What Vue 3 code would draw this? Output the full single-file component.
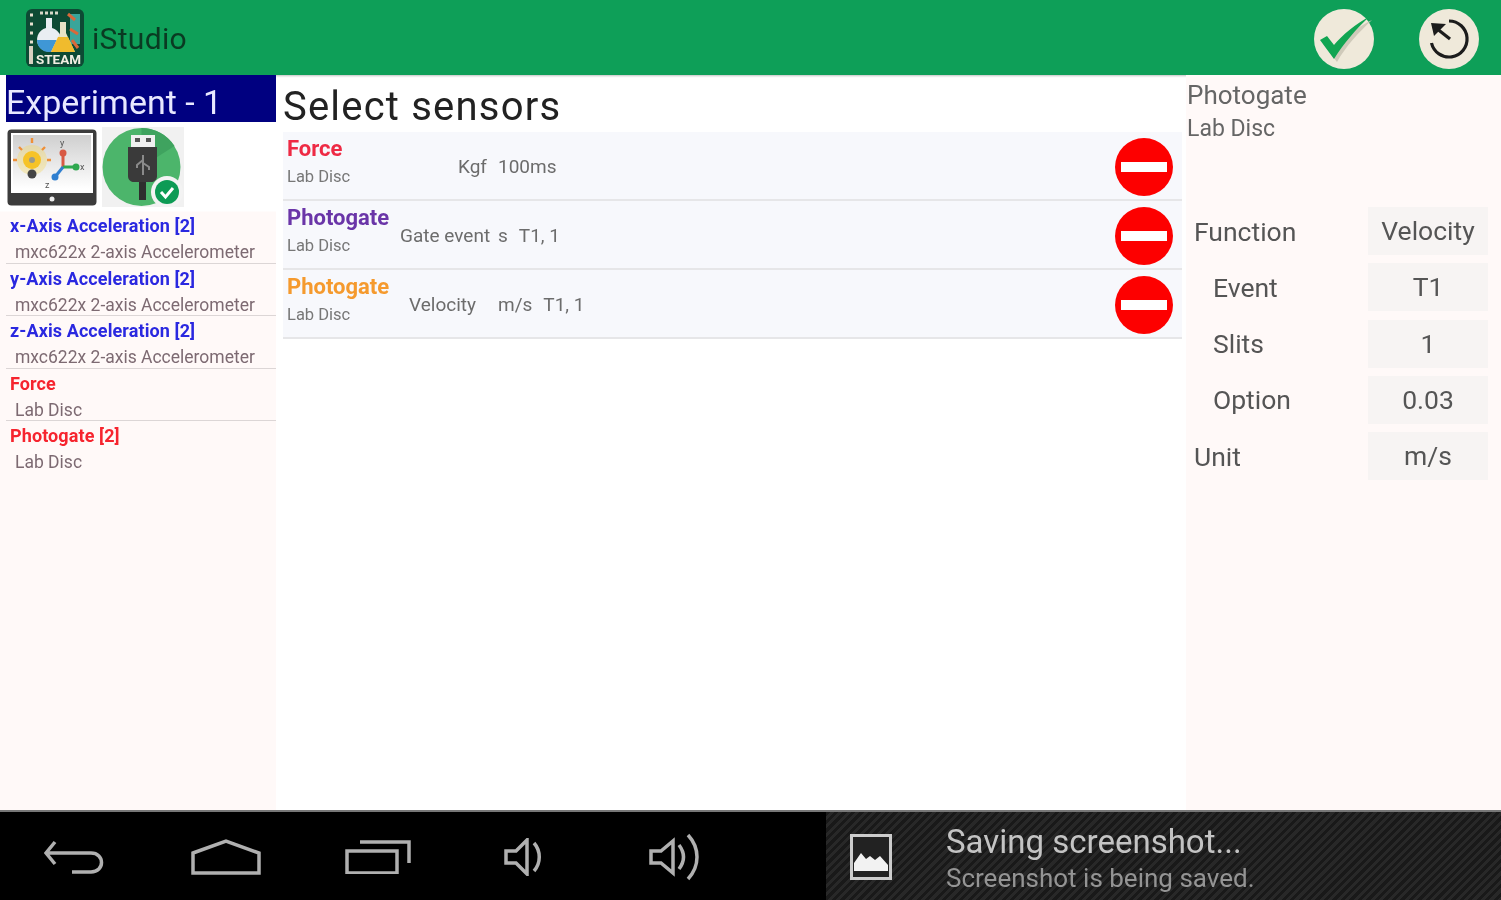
<template>
  <div class="screen">
    <header class="topbar">
      <div class="brand">
        <svg class="logo" viewBox="0 0 58 58">
          <rect width="58" height="58" rx="6" fill="#0d4a34" />
          <path d="M44 5h10v30H44z" fill="#3aa59a" />
          <path d="M4 6h3M4 15h3M4 24h3M4 33h3" stroke="#e8e0d0" stroke-width="3" />
          <path d="M42 5l7 6M44 20l8 5M46 31l6 8" stroke="#d9683a" stroke-width="3" />
          <path d="M14 4h18" stroke="#d8d8c8" stroke-width="3" stroke-dasharray="3 2" />
          <path d="M20 9h6v10a12 12 0 1 1-6 0z" fill="#e9eef2" />
          <path d="M11 31h24a12 12 0 0 1-24 0z" fill="#3f97d6" />
          <path d="M34 13h6v11l9 19H25l9-19z" fill="#e9e3c6" />
          <path d="M32 28h10l7 15H25z" fill="#f0bb2d" />
          <rect x="3" y="37" width="4" height="18" fill="#d8d0c0" />
          <text x="10" y="55" class="logo-text" textLength="45" lengthAdjust="spacingAndGlyphs">STEAM</text>
        </svg>
        <span class="app-name">iStudio</span>
      </div>
      <div class="actions">
        <svg class="action" viewBox="0 0 60 60">
          <circle cx="30" cy="30" r="30" fill="#efe9da" />
          <path d="M9 35l6-4 7 9C30 29 42 19 58 11 45 23 32 37 23 53z" fill="#cfcaba" />
          <path d="M6 31l7-4 7 9C28 26 42 15 56 7 42 20 30 34 20 50z" fill="#11a552" />
        </svg>
        <svg class="action" viewBox="0 0 60 60">
          <circle cx="30" cy="30" r="30" fill="#efe9da" />
          <path d="M30 12a18 18 0 1 1-17.500 22" fill="none" stroke="#1c1c1c" stroke-width="3.200" />
          <path d="M31 30L17 19" stroke="#1c1c1c" stroke-width="3.200" fill="none" />
          <path d="M12 14l15 1-12 12z" fill="#1c1c1c" />
        </svg>
      </div>
    </header>

    <main class="content">
      <aside class="side">
        <div class="exp-title">Experiment - 1</div>
        <div class="tiles">
          <svg class="tablet" viewBox="0 0 90 77">
            <defs>
              <linearGradient id="screen-fill" x1="0" y1="0" x2="0" y2="1">
                <stop offset="0" stop-color="#cfcfcf" />
                <stop offset="1" stop-color="#ffffff" />
              </linearGradient>
            </defs>
            <rect x="0.500" y="0.500" width="89" height="76" rx="4" fill="#3c3c3c" />
            <rect x="4" y="4" width="82" height="60" fill="#fff" />
            <rect x="6" y="6" width="78" height="54" fill="url(#screen-fill)" />
            <circle cx="25" cy="31" r="15" fill="#f6d65a" opacity="0.35" />
            <circle cx="25" cy="31" r="9" fill="#f6c327" />
            <circle cx="25" cy="31" r="3" fill="#9a9a8a" />
            <circle cx="25" cy="45" r="4.500" fill="#444" />
            <path d="M25 9v5M10 31H6M44 31h-4M12 18l3 3M38 18l-3 3" stroke="#ef9038" stroke-width="2.400" />
            <path d="M56 38V24" stroke="#d85a44" stroke-width="3" />
            <circle cx="56" cy="24" r="3.500" fill="#d85a44" />
            <path d="M56 38H70" stroke="#2fa84f" stroke-width="3" />
            <circle cx="69" cy="38" r="3.500" fill="#2fa84f" />
            <path d="M56 38L48 48" stroke="#2f7fd0" stroke-width="3" />
            <circle cx="48" cy="48" r="3.500" fill="#2f7fd0" />
            <text x="53" y="17" class="axis">y</text>
            <text x="73" y="41" class="axis">x</text>
            <text x="38" y="59" class="axis">z</text>
            <circle cx="45" cy="70" r="2.500" fill="#eee" />
          </svg>
          <div class="usb-tile">
            <svg class="usb" viewBox="0 0 82 80">
              <circle cx="39.500" cy="40" r="39" fill="#4cb56b" />
              <path d="M39.500 1a39 39 0 0 1 33 18L39.500 40z" fill="#3fa35f" />
              <rect x="29" y="8" width="24" height="14" fill="#f0f0f0" />
              <rect x="33" y="11" width="5" height="4" fill="#555" />
              <rect x="44" y="11" width="5" height="4" fill="#555" />
              <path d="M26 20h29v29c0 4-3 6-6 6H32c-3 0-6-2-6-6z" fill="#3a3a3a" />
              <path d="M41 28v20M41 33l-6 5v3M41 36l6 4v3" stroke="#8a8a8a" stroke-width="2" fill="none" />
              <rect x="37" y="55" width="7" height="18" fill="#2e2e2e" />
              <circle cx="65" cy="65" r="16" fill="#f3f3f3" />
              <circle cx="65" cy="65" r="12" fill="#0d9b55" />
              <path d="M59 65l4.500 5 7.500-9" fill="none" stroke="#fff" stroke-width="3" />
            </svg>
          </div>
        </div>
        <ul class="source-list">
          <li v-for="item in sources" :key="item.name" class="source">
            <span class="source-name" :class="item.kind">{{ item.name }}</span>
            <span class="source-sub">{{ item.sub }}</span>
          </li>
        </ul>
      </aside>

      <section class="middle">
        <h1 class="heading">Select sensors</h1>
        <div v-for="row in rows" :key="row.first" class="row">
          <div class="row-name">
            <span class="row-title" :style="{ color: row.color }">{{ row.title }}</span>
            <span class="row-sub">Lab Disc</span>
          </div>
          <span class="row-first" :style="{ paddingLeft: row.offset + 'px' }">{{ row.first }}</span>
          <span class="row-rest">
            <span v-for="part in row.rest" :key="part">{{ part }}</span>
          </span>
          <span class="remove"><i></i></span>
        </div>
      </section>

      <aside class="detail">
        <div class="detail-title">Photogate</div>
        <div class="detail-sub">Lab Disc</div>
        <div class="form">
          <div v-for="field in fields" :key="field.label" class="field">
            <span class="field-label" :class="{ nested: field.nested }">{{ field.label }}</span>
            <span class="field-value">{{ field.value }}</span>
          </div>
        </div>
      </aside>
    </main>

    <footer class="navbar">
      <div class="nav-icons">
        <svg class="nav back" viewBox="0 0 62 34">
          <path d="M11 2L2 13l9 11M3 13h44c14 0 14 19 0 19H28" />
        </svg>
        <svg class="nav home" viewBox="0 0 70 36">
          <path d="M2 14L35 2l33 12v20H2z" />
        </svg>
        <svg class="nav recent" viewBox="0 0 66 34">
          <path d="M2 11h50v22H2zM15 2h49v21" />
        </svg>
        <svg class="nav vol" viewBox="0 0 42 38">
          <path d="M2 13h10L23 2v34L12 25H2zM30 5c7 8 7 20 0 28" />
        </svg>
        <svg class="nav vol-up" viewBox="0 0 54 48">
          <path d="M2 18h10L24 8v32L12 30H2zM30 12c6 8 6 16 0 24M39 2c12 13 12 31 0 44" />
        </svg>
      </div>
      <div class="notice">
        <svg class="notice-icon" viewBox="0 0 42 46">
          <rect x="1.500" y="1.500" width="39" height="43" fill="#222" stroke="#ccc" stroke-width="3" />
          <path d="M4 37V29l7-10 5 6 4-3 5 4 5-4 8 9v6z" fill="#f2f2f2" />
        </svg>
        <div class="notice-text">
          <div class="notice-title">Saving screenshot...</div>
          <div class="notice-sub">Screenshot is being saved.</div>
        </div>
      </div>
    </footer>
  </div>
</template>

<script setup>
const acc = 'mxc622x 2-axis Accelerometer'

const sources = [
  { name: 'x-Axis Acceleration [2]', sub: acc, kind: 'blue' },
  { name: 'y-Axis Acceleration [2]', sub: acc, kind: 'blue' },
  { name: 'z-Axis Acceleration [2]', sub: acc, kind: 'blue' },
  { name: 'Force', sub: 'Lab Disc', kind: 'red' },
  { name: 'Photogate [2]', sub: 'Lab Disc', kind: 'red' },
]

const rows = [
  { title: 'Force', color: '#ee2a44', first: 'Kgf', rest: ['100ms'], offset: 58 },
  { title: 'Photogate', color: '#6a35a8', first: 'Gate event', rest: ['s', 'T1, 1'], offset: 0 },
  { title: 'Photogate', color: '#f59a2e', first: 'Velocity', rest: ['m/s', 'T1, 1'], offset: 9 },
]

const fields = [
  { label: 'Function', value: 'Velocity' },
  { label: 'Event', value: 'T1', nested: true },
  { label: 'Slits', value: '1', nested: true },
  { label: 'Option', value: '0.03', nested: true },
  { label: 'Unit', value: 'm/s' },
]
</script>

<style scoped>
.screen {
  width: 1501px;
  height: 900px;
  overflow: hidden;
  display: flex;
  flex-direction: column;
  font-family: Roboto, "Liberation Sans", sans-serif;
  background: #fff;
  filter: blur(0.7px);
}

.topbar {
  height: 75px;
  flex: none;
  display: flex;
  align-items: center;
  justify-content: space-between;
  background: #0e9f58;
  box-shadow: 0 1px 2px rgba(0, 0, 0, 0.25);
  padding: 0 22px 0 26px;
}
.brand {
  display: flex;
  align-items: center;
  gap: 8px;
  margin-top: 1px;
}
.logo {
  width: 58px;
  height: 58px;
}
.logo-text {
  font-size: 12px;
  font-weight: 700;
  fill: #f2efe2;
}
.app-name {
  font-size: 30px;
  color: #0a3a22;
  letter-spacing: 0.3px;
  margin-top: 1px;
}
.actions {
  display: flex;
  gap: 45px;
  margin-top: 2px;
}
.action {
  width: 60px;
  height: 60px;
}

.content {
  flex: 1;
  display: flex;
  min-height: 0;
}

.side {
  width: 276px;
  flex: none;
  padding-left: 6px;
  box-sizing: border-box;
  background: linear-gradient(#fff 136px, #fff9f8 137px);
}
.exp-title {
  height: 47px;
  line-height: 54px;
  background: #000080;
  color: #e8e8ff;
  font-size: 34px;
  overflow: hidden;
  white-space: nowrap;
}
.tiles {
  display: flex;
  align-items: flex-end;
  gap: 5px;
  margin-top: 5px;
  height: 80px;
}
.tablet {
  width: 90px;
  height: 77px;
  margin-bottom: 1px;
  margin-left: 1px;
}
.usb-tile {
  width: 82px;
  height: 80px;
  background: #f1f1f1;
}
.usb {
  display: block;
  width: 82px;
  height: 80px;
}
.source-list {
  list-style: none;
  margin: 4px 0 0;
  padding: 0;
}
.source {
  height: 52.500px;
  box-sizing: border-box;
  padding: 4px 0 0 4px;
  border-bottom: 1px solid #dcd6d6;
  display: flex;
  flex-direction: column;
}
.source:last-child {
  border-bottom: none;
}
.source-name {
  font-size: 18px;
  line-height: 22px;
  font-weight: 700;
  letter-spacing: 0.1px;
}
.source-name.blue {
  color: #2a28e0;
}
.source-name.red {
  color: #f6242e;
}
.source-sub {
  font-size: 17.500px;
  line-height: 24px;
  margin-top: 3px;
  padding-left: 5px;
  color: #7d6a72;
  white-space: nowrap;
}

.middle {
  flex: 1;
  min-width: 0;
  padding: 0 4px 0 7px;
}
.heading {
  margin: 0;
  height: 57px;
  line-height: 64px;
  font-size: 40px;
  font-weight: 400;
  color: #222;
  letter-spacing: 1.2px;
}
.row {
  height: 69px;
  box-sizing: border-box;
  display: flex;
  align-items: center;
  background: #f7f8fc;
  border-bottom: 2px solid #e6e6e8;
  padding-left: 4px;
  font-size: 19px;
  color: #6c6c6c;
}
.row-name {
  width: 113px;
  flex: none;
  display: flex;
  flex-direction: column;
  margin-top: -7px;
}
.row-title {
  font-size: 22px;
  line-height: 28px;
  font-weight: 700;
}
.row-sub {
  font-size: 16.500px;
  line-height: 26px;
  margin-top: 1px;
  color: #777;
}
.row-first {
  width: 98px;
  flex: none;
  box-sizing: border-box;
  white-space: nowrap;
  margin-top: 2px;
}
.row-rest {
  flex: 1;
  display: flex;
  gap: 11px;
  margin-top: 2px;
}
.remove {
  width: 58px;
  height: 58px;
  margin: 2px 9px 0 0;
  border-radius: 50%;
  background: #fd0000;
  display: flex;
  align-items: center;
  justify-content: center;
}
.remove i {
  width: 46px;
  height: 10px;
  background: #fff;
}

.detail {
  width: 315px;
  flex: none;
  background: #fff9f8;
  padding: 4px 13px 0 1px;
  box-sizing: border-box;
  margin-left: auto;
}
.detail-title {
  font-size: 26px;
  line-height: 32px;
  color: #666;
}
.detail-sub {
  font-size: 23px;
  line-height: 33px;
  padding-top: 1px;
  color: #666;
}
.form {
  margin-top: 62px;
  display: flex;
  flex-direction: column;
  gap: 8.300px;
}
.field {
  display: flex;
  justify-content: space-between;
  align-items: center;
  height: 48px;
  font-size: 26.500px;
  color: #555;
}
.field-label {
  padding-left: 7px;
}
.field-label.nested {
  padding-left: 26px;
}
.field-value {
  width: 120px;
  height: 48px;
  line-height: 48px;
  text-align: center;
  background: #f7f4f3;
}

.navbar {
  height: 90px;
  flex: none;
  display: flex;
  background: #000;
  border-top: 2px solid #777;
  box-sizing: border-box;
}
.nav-icons {
  width: 826px;
  flex: none;
  display: flex;
  align-items: center;
  padding-left: 44px;
  box-sizing: border-box;
}
.nav {
  flex: none;
  fill: none;
  stroke: #b0b0b0;
  stroke-width: 3.500;
}
.back {
  width: 62px;
  height: 34px;
  margin-top: 2px;
}
.home {
  width: 70px;
  height: 36px;
  margin: 2px 0 0 85px;
}
.recent {
  width: 66px;
  height: 34px;
  margin: 2px 0 0 84px;
}
.vol {
  width: 42px;
  height: 38px;
  margin: 2px 0 0 93px;
}
.vol-up {
  width: 54px;
  height: 48px;
  margin: 2px 0 0 103px;
}
.notice {
  flex: 1;
  display: flex;
  align-items: center;
  background: repeating-linear-gradient(135deg, #191919 0 3px, #282828 3px 6px);
}
.notice-icon {
  width: 42px;
  height: 46px;
  margin-left: 24px;
  margin-top: 2px;
}
.notice-text {
  margin-left: 54px;
  margin-top: 4px;
}
.notice-title {
  font-size: 33px;
  line-height: 40px;
  color: #c4c4c4;
}
.notice-sub {
  font-size: 26px;
  line-height: 32px;
  color: #949494;
}
.axis {
  font-size: 9px;
  fill: #555;
}
</style>
